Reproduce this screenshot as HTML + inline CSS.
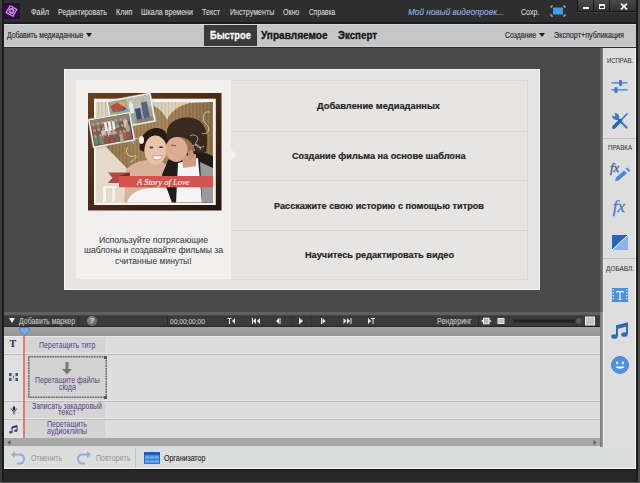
<!DOCTYPE html>
<html><head><meta charset="utf-8">
<style>
*{margin:0;padding:0;box-sizing:border-box}
html,body{width:640px;height:483px;overflow:hidden;background:#2b2b2b;font-family:"Liberation Sans",sans-serif}
.a{position:absolute}
.t{position:absolute;white-space:nowrap;line-height:1;transform-origin:0 0;font-family:"Liberation Sans",sans-serif}
</style></head><body>
<div class="a" style="left:0;top:0;width:640px;height:483px;background:#2b2b2b"></div>
<!-- title bar -->
<div class="a" style="left:0;top:0;width:640px;height:24px;background:#2e2e2e"></div>
<div class="a" style="left:0;top:0;width:2px;height:483px;background:#3c3c3c"></div>
<div class="a" style="left:2px;top:0;width:2px;height:483px;background:#1c1c1c"></div>
<div class="a" style="left:637px;top:0;width:3px;height:483px;background:#4a4a4a"></div>
<div class="a" style="left:636px;top:0;width:1.5px;height:483px;background:#1c1c1c"></div>
<!-- logo -->
<div class="a" style="left:3px;top:3px;width:17px;height:16px;background:radial-gradient(circle at 50% 50%,#45185c,#2a0c3a 75%)"></div>
<svg class="a" style="left:3px;top:3px" width="17" height="16" viewBox="0 0 17 16">
 <rect x="4.6" y="4.1" width="7.8" height="7.8" transform="rotate(30 8.5 8)" fill="none" stroke="#d3a0ea" stroke-width="1.1"/>
 <circle cx="8.5" cy="8" r="2.9" fill="#dc78f0"/><circle cx="8.5" cy="8" r="1" fill="#1e0628"/>
</svg>
<!-- screen icon -->
<svg class="a" style="left:550px;top:5px" width="16" height="12" viewBox="0 0 16 12">
 <rect x="3" y="2.5" width="10" height="7" fill="#3da0e0"/>
 <path d="M1 3V1H3M13 1H15V3M15 9V11H13M3 11H1V9" stroke="#bdbdbd" stroke-width="1" fill="none"/>
</svg>
<!-- window buttons -->
<div class="a" style="left:577px;top:0;width:60px;height:12px;background:#161616;border-radius:0 0 2px 2px"></div>
<div class="a" style="left:578px;top:0;width:15px;height:11px;background:linear-gradient(#4a4a4a,#323232)"></div>
<div class="a" style="left:594px;top:0;width:15px;height:11px;background:linear-gradient(#4a4a4a,#323232)"></div>
<div class="a" style="left:610px;top:0;width:26px;height:11px;background:linear-gradient(#4a4a4a,#323232)"></div>
<div class="a" style="left:583px;top:6.5px;width:6px;height:2px;background:#f4f4f4"></div>
<div class="a" style="left:599px;top:4px;width:6px;height:5px;border:1.2px solid #f4f4f4;border-top-width:2px"></div>
<svg class="a" style="left:619.5px;top:3px" width="8" height="7" viewBox="0 0 8 7"><path d="M1 0.5L7 6.5M7 0.5L1 6.5" stroke="#f4f4f4" stroke-width="1.8"/></svg>
<div class="a" style="left:577px;top:12px;width:60px;height:1px;background:#3a3a3a"></div>

<!-- toolbar -->
<div class="a" style="left:4px;top:24px;width:632px;height:23px;background:#c5c6c8"></div>
<div class="a" style="left:4px;top:47px;width:632px;height:1px;background:#2a2a2a"></div><div class="a" style="left:4px;top:46px;width:632px;height:1px;background:#d2d2d2"></div><div class="a" style="left:4px;top:24px;width:632px;height:1px;background:#d8d8d8"></div><div class="a" style="left:4px;top:22px;width:632px;height:2px;background:#1c1c1c"></div>
<div class="a" style="left:204px;top:25px;width:53px;height:21px;background:#3a3a3a"></div>
<svg class="a" style="left:86px;top:33px" width="6" height="4" viewBox="0 0 6 4"><path d="M0 0H6L3 4Z" fill="#1a1a1a"/></svg>
<svg class="a" style="left:538.5px;top:33px" width="6" height="4" viewBox="0 0 6 4"><path d="M0 0H6L3 4Z" fill="#1a1a1a"/></svg>

<!-- main area -->
<div class="a" style="left:4px;top:48px;width:596px;height:264px;background:#4a4a4a"></div>
<div class="a" style="left:600px;top:48px;width:3px;height:399px;background:linear-gradient(90deg,#5c5c5c,#7e7e7e)"></div><div class="a" style="left:600px;top:312px;width:3px;height:135px;background:linear-gradient(90deg,#7a7a7a,#9c9c9c)"></div>

<!-- welcome panel -->
<div class="a" style="left:64px;top:69px;width:476px;height:221px;background:#e5e4e2;border:1px solid #f3f3f2;border-right-color:#f8f8f8"></div>
<div class="a" style="left:230px;top:80px;width:298px;height:200px;border:1px solid #dad9d7;background:#e6e5e3"></div>
<div class="a" style="left:231px;top:130.5px;width:296px;height:1px;background:#d6d5d3"></div>
<div class="a" style="left:231px;top:180px;width:296px;height:1px;background:#d6d5d3"></div>
<div class="a" style="left:231px;top:229.5px;width:296px;height:1px;background:#d6d5d3"></div>
<div class="a" style="left:76px;top:80px;width:155px;height:199px;background:#f1f0ef"></div>
<svg class="a" style="left:230px;top:148px" width="8" height="14" viewBox="0 0 8 14"><path d="M0 0L7 7L0 14Z" fill="#f1f0ef"/></svg>

<!-- photo -->
<svg class="a" style="left:86px;top:88px" width="140" height="126" viewBox="86 88 140 126">
 <defs>
  <linearGradient id="wood" x1="0" y1="0" x2="1" y2="0">
   <stop offset="0" stop-color="#94744a"/><stop offset="0.5" stop-color="#a6855a"/><stop offset="1" stop-color="#8c6c44"/>
  </linearGradient>
  <linearGradient id="frm" x1="0" y1="0" x2="1" y2="1">
   <stop offset="0" stop-color="#6a3e1c"/><stop offset="0.6" stop-color="#432612"/><stop offset="1" stop-color="#22150c"/>
  </linearGradient>
  <pattern id="stripes" width="3.5" height="10" patternUnits="userSpaceOnUse"><rect x="0" width="1" height="10" fill="#000" opacity="0.10"/><rect x="2" width="0.6" height="10" fill="#fff" opacity="0.10"/></pattern>
  <clipPath id="pc"><rect x="96" y="102" width="117" height="100.5"/></clipPath>
 </defs>
 <rect x="88" y="93" width="133.5" height="117.5" fill="url(#frm)"/>
 <rect x="94" y="98.7" width="121.8" height="106.3" fill="#f4f2ee"/>
 <g clip-path="url(#pc)">
  <rect x="96" y="102" width="117" height="101" fill="#ddd1ba"/>
  <!-- heart wood -->
  <path d="M167 120 C162 108 150 102 138 104 L120 112 L104 140 L107 148 L133 175 L160 203 L213 203 L213 102 L190 103 C178 106 170 112 167 120Z" fill="url(#wood)"/>
  <rect x="96" y="102" width="117" height="101" fill="url(#stripes)"/>
  <path d="M96 150 L107 148 L133 175 L127 203 L96 203Z" fill="#e4dacb"/>
  <rect x="103" y="186" width="3" height="16" fill="#f6f4ef"/><rect x="112" y="188" width="3" height="14" fill="#f2efe9"/><rect x="103" y="186" width="14" height="2" fill="#f2efe9"/>
  <!-- woman -->
  <path d="M124 203 L126 170 C134 160 150 158 162 162 C172 166 176 180 176 203Z" fill="#d9b099"/>
  <path d="M140 150 C138 136 148 127 158 128 C166 129 170 136 168 146 L164 140 C158 134 150 134 146 142 L144 152Z" fill="#2a1c14"/>
  <ellipse cx="155.5" cy="150" rx="11" ry="14.5" fill="#e8c2aa"/>
  <path d="M145 140 C150 133 160 133 166 140 L166 136 C160 130 150 130 145 136Z" fill="#2a1c14"/>
  <ellipse cx="151.4" cy="147.5" rx="2" ry="0.9" fill="#5a3a30"/><ellipse cx="161" cy="147.2" rx="2" ry="0.9" fill="#5a3a30"/>
  <path d="M152 156.2 Q157.5 155.5 162.5 156 Q161 160 157 160 Q153 160 152 156.2Z" fill="#fafafa" stroke="#b86a60" stroke-width="0.6"/>
  <ellipse cx="141.5" cy="140" rx="2.5" ry="4" fill="#f0ece0"/>
  <path d="M127 203 C130 190 146 187 162 188 C172 189 178 196 180 203Z" fill="#f6f4f2"/>
  <!-- man -->
  <path d="M162 175 L168 160 L198 150 L213 156 L213 203 L172 203Z" fill="#1f1c1a"/>
  <path d="M178 163 L198 158 L202 203 L176 203Z" fill="#f4f4f4"/>
  <path d="M200 162 L213 168 L213 203 L202 203Z" fill="#9a9a98"/>
  <path d="M182 156 L196 154 L196 166 L183 168Z" fill="#cf9c82"/>
  <path d="M167 134 C166 122 180 116 192 118 C204 120 210 132 206 152 L196 153 C194 142 186 136 176 137 L168 141Z" fill="#3a291e"/>
  <ellipse cx="176.5" cy="149.5" rx="11" ry="12.5" fill="#dcab90"/>
  <path d="M168 140 C172 134 182 132 190 138 L188 132 C182 128 172 128 168 134Z" fill="#3a291e"/>
  <ellipse cx="191" cy="155" rx="3" ry="5" fill="#c89276"/>
  <path d="M171 145 L176 146" stroke="#6a4a3a" stroke-width="0.8"/>
<!-- swirls -->
  <g stroke="#f3ede2" stroke-width="0.7" fill="none" opacity="0.9">
   <path d="M210 112 C203 110 201 120 206 124 C211 128 208 136 202 133"/>
   <path d="M190 136 C194 133 200 137 197 141 C193 145 199 150 204 146"/>
   <path d="M193 146 C196 143 202 146 200 150"/>
   <path d="M128 147 C124 152 128 158 134 156 C138 154 136 160 130 162"/>
   <path d="M140 140 C136 136 130 140 134 144"/>
  </g>
 </g>
 <!-- photos (overlap frame) -->
 <g transform="translate(106 101) rotate(-10.8)">
 <rect x="0" y="0" width="45.3" height="29.4" fill="#f2f2f0" stroke="#b8b8b4" stroke-width="0.4"/>
 <rect x="1.6" y="1.6" width="42" height="26.2" fill="#9aa592"/>
 <rect x="20" y="1.6" width="23.6" height="12" fill="#b8c0b0"/>
 <path d="M3 6 L11 3.5 L17 9 L12 13 L5 12.5Z" fill="#c4483c"/><path d="M11 3.5 L17 9 L19 5Z" fill="#d8b53c"/><path d="M5 12.5 L12 13 L8 9.5Z" fill="#4a8e50"/><path d="M12 13 L17 9 L18.5 12Z" fill="#3c5294"/>
 <rect x="1.6" y="16" width="18" height="11.8" fill="#7a8a6a"/>
 <rect x="22" y="7" width="3.5" height="10" fill="#ecece8"/><circle cx="23.7" cy="6" r="1.6" fill="#e8d8c8"/>
 <rect x="27" y="13" width="5" height="12" fill="#3c4a7c"/><circle cx="29.5" cy="11.5" r="1.8" fill="#d8b8a0"/>
 <rect x="34" y="8" width="6" height="18" fill="#56627e"/><circle cx="37" cy="6.5" r="2" fill="#c8a890"/>
 <rect x="26" y="24" width="17" height="3.8" fill="#8a8070"/>
 </g>
 <g transform="translate(88 119.2) rotate(-10.1)">
 <rect x="0" y="0" width="42.8" height="29.3" fill="#f0f0ee" stroke="#b8b8b4" stroke-width="0.4"/>
 <rect x="1.6" y="1.6" width="39.6" height="26.1" fill="#5e5048"/>
 <rect x="1.6" y="1.6" width="39.6" height="7" fill="#8e8070"/>
 <rect x="2.5" y="6.3" width="3.5" height="8" fill="#a86050"/>
 <circle cx="4.2" cy="6.2" r="1.3" fill="#c0a088"/>
 <rect x="6.9" y="7.2" width="3.9" height="8" fill="#6a8a68"/>
 <circle cx="8.9" cy="6.2" r="1.3" fill="#c0a088"/>
 <rect x="11.8" y="6.5" width="3.9" height="8" fill="#a86050"/>
 <circle cx="13.8" cy="6.2" r="1.3" fill="#c0a088"/>
 <rect x="16.7" y="7.0" width="3.9" height="8" fill="#a86050"/>
 <circle cx="18.7" cy="6.2" r="1.3" fill="#c0a088"/>
 <rect x="21.4" y="7.7" width="3.3" height="8" fill="#7a88a0"/>
 <circle cx="23.0" cy="6.2" r="1.3" fill="#c0a088"/>
 <rect x="25.3" y="6.3" width="4.5" height="8" fill="#6a8a68"/>
 <circle cx="27.5" cy="6.2" r="1.3" fill="#c0a088"/>
 <rect x="30.7" y="7.6" width="3.1" height="8" fill="#9a5048"/>
 <circle cx="32.3" cy="6.2" r="1.3" fill="#c0a088"/>
 <rect x="34.2" y="7.4" width="4.2" height="8" fill="#c4c4c0"/>
 <circle cx="36.3" cy="6.2" r="1.3" fill="#c0a088"/>
 <rect x="2.5" y="13.9" width="3.8" height="8" fill="#5a6a88"/>
 <circle cx="4.4" cy="12.2" r="1.3" fill="#c0a088"/>
 <rect x="6.6" y="12.3" width="3.7" height="8" fill="#9a5048"/>
 <circle cx="8.5" cy="12.2" r="1.3" fill="#c0a088"/>
 <rect x="10.7" y="13.6" width="4.9" height="8" fill="#c4c4c0"/>
 <circle cx="13.2" cy="12.2" r="1.3" fill="#c0a088"/>
 <rect x="16.5" y="13.1" width="3.8" height="8" fill="#c4c4c0"/>
 <circle cx="18.4" cy="12.2" r="1.3" fill="#c0a088"/>
 <rect x="21.0" y="13.8" width="3.8" height="8" fill="#b4a494"/>
 <circle cx="22.9" cy="12.2" r="1.3" fill="#c0a088"/>
 <rect x="25.5" y="14.0" width="4.9" height="8" fill="#8e5a50"/>
 <circle cx="28.0" cy="12.2" r="1.3" fill="#c0a088"/>
 <rect x="31.1" y="13.9" width="3.3" height="8" fill="#786258"/>
 <circle cx="32.8" cy="12.2" r="1.3" fill="#c0a088"/>
 <rect x="35.4" y="13.3" width="4.1" height="8" fill="#b4a494"/>
 <circle cx="37.5" cy="12.2" r="1.3" fill="#c0a088"/>
 <rect x="2.5" y="18.1" width="3.5" height="8.5" fill="#6a8a68"/>
 <circle cx="4.3" cy="18.2" r="1.3" fill="#c0a088"/>
 <rect x="6.9" y="18.7" width="5.0" height="8.5" fill="#6a8a68"/>
 <circle cx="9.4" cy="18.2" r="1.3" fill="#c0a088"/>
 <rect x="12.2" y="18.6" width="4.8" height="8.5" fill="#9a5048"/>
 <circle cx="14.5" cy="18.2" r="1.3" fill="#c0a088"/>
 <rect x="17.8" y="19.2" width="4.7" height="8.5" fill="#9a5048"/>
 <circle cx="20.1" cy="18.2" r="1.3" fill="#c0a088"/>
 <rect x="23.3" y="19.1" width="3.8" height="8.5" fill="#786258"/>
 <circle cx="25.2" cy="18.2" r="1.3" fill="#c0a088"/>
 <rect x="28.0" y="20.0" width="3.6" height="8.5" fill="#b4a494"/>
 <circle cx="29.8" cy="18.2" r="1.3" fill="#c0a088"/>
 <rect x="32.0" y="18.1" width="3.2" height="8.5" fill="#a86050"/>
 <circle cx="33.6" cy="18.2" r="1.3" fill="#c0a088"/>
 <rect x="35.5" y="18.3" width="3.8" height="8.5" fill="#8e5a50"/>
 <circle cx="37.4" cy="18.2" r="1.3" fill="#c0a088"/>
 <rect x="15" y="6" width="2.5" height="9" fill="#f4f4f2"/><rect x="19" y="6" width="2.5" height="9" fill="#f4f4f2"/><rect x="23" y="6.5" width="2.5" height="8" fill="#f0f0ee"/>
 </g>
 <!-- banner -->
 <path d="M107.8 172.5 L129.7 172.5 L129.7 183 L107.8 183 L112.5 177.7Z" fill="#b84642"/>
 <path d="M119 176 L129.7 172.5 L129.7 176Z" fill="#7a2a28"/>
 <rect x="119" y="176" width="94" height="11.3" fill="#d4534e"/>
 <text x="137" y="184.6" font-family="Liberation Serif" font-style="italic" font-size="8.5" fill="#fbeae6" stroke="#fbeae6" stroke-width="0.15">A Story of Love</text>
</svg>

<!-- timeline -->
<div class="a" style="left:4px;top:312px;width:596px;height:3px;background:#606060"></div>
<div class="a" style="left:4px;top:315px;width:596px;height:12px;background:#3a3a3a"></div><div class="a" style="left:4px;top:326px;width:596px;height:1px;background:#222"></div>
<div class="a" style="left:78px;top:315px;width:1px;height:12px;background:#2a2a2a"></div>
<div class="a" style="left:478px;top:315px;width:1px;height:12px;background:#2a2a2a"></div><div class="a" style="left:167px;top:315px;width:1px;height:12px;background:#2a2a2a"></div><div class="a" style="left:291px;top:316px;width:1px;height:10px;background:#333"></div><div class="a" style="left:311px;top:316px;width:1px;height:10px;background:#333"></div><div class="a" style="left:4px;top:315px;width:596px;height:1px;background:#444"></div>
<svg class="a" style="left:9px;top:318px" width="6" height="5" viewBox="0 0 6 5"><path d="M0 0H6L3 5Z" fill="#f0f0f0"/></svg>
<div class="a" style="left:87px;top:316px;width:9.5px;height:9.5px;border-radius:50%;background:radial-gradient(circle at 40% 35%,#8a8a8a,#5e5e5e)"></div>
<div class="t" style="left:89.6px;top:317px;font-size:8px;font-weight:700;color:#dcdcdc">?</div>
<!-- transport icons -->
<svg class="a" style="left:220px;top:315px" width="160" height="12" viewBox="0 0 160 12">
 <g fill="#e8e8e8">
  <path d="M7.5 3H11.5V4H10V9H9V4H7.5Z"/><path d="M15 3V9L12 6Z"/>
  <rect x="32" y="3" width="1" height="6"/><path d="M36 3V9L33 6Z"/><path d="M40 3V9L37 6Z"/>
  <path d="M59 3V9L56 6Z"/><rect x="59.5" y="3" width="1" height="6"/>
  <path d="M79 2.5L83 6L79 9.5Z"/>
  <rect x="101" y="3" width="1" height="6"/><path d="M102.5 3L105.5 6L102.5 9Z"/>
  <path d="M123.5 3L126.5 6L123.5 9Z"/><path d="M127 3L130 6L127 9Z"/><rect x="130.5" y="3" width="1" height="6"/>
  <path d="M148 3L151 6L148 9Z"/><path d="M151 3H155V4H153.5V9H152.5V4H151Z"/>
 </g>
</svg>
<svg class="a" style="left:480px;top:315px" width="120" height="12" viewBox="0 0 120 12">
 <g fill="#e0e0e0">
  <path d="M1 6L3.2 4.2V7.8Z"/><rect x="3.5" y="3.2" width="5.5" height="5.6" fill="#b8b8b8" stroke="#f0f0f0" stroke-width="1"/><path d="M11.5 6L9.3 4.2V7.8Z"/>
 </g>
 <rect x="18" y="3.5" width="6" height="5" fill="#c0c0c0" stroke="#e8e8e8" stroke-width="1"/>
 <rect x="33" y="4.6" width="65" height="2.8" rx="1.4" fill="#222"/>
 <circle cx="98.7" cy="6" r="3" fill="#5a5a5a" stroke="#444" stroke-width="0.5"/>
 <rect x="105.5" y="2" width="9" height="8" fill="#c4c4c4" stroke="#ececec" stroke-width="1"/>
</svg>
<div class="a" style="left:4px;top:327px;width:596px;height:9px;background:linear-gradient(#a2a2a2,#959595)"></div>
<div class="a" style="left:4px;top:336px;width:596px;height:102px;background:#dddddd"></div>
<div class="a" style="left:4px;top:336px;width:19px;height:102px;background:#e0e0e0"></div>
<div class="a" style="left:25px;top:336px;width:81px;height:102px;background:#d4d4d4"></div>
<div class="a" style="left:106px;top:336px;width:1px;height:102px;background:#e6e6e6"></div><div class="a" style="left:4px;top:336px;width:596px;height:1px;background:#e9e9e9"></div>
<div class="a" style="left:4px;top:353px;width:596px;height:1px;background:#e8e8e8"></div><div class="a" style="left:4px;top:354px;width:596px;height:1px;background:#bcbcbc"></div>
<div class="a" style="left:4px;top:400px;width:596px;height:1px;background:#e8e8e8"></div><div class="a" style="left:4px;top:401px;width:596px;height:1px;background:#bcbcbc"></div>
<div class="a" style="left:4px;top:418px;width:596px;height:1px;background:#e8e8e8"></div><div class="a" style="left:4px;top:419px;width:596px;height:1px;background:#bcbcbc"></div>
<div class="a" style="left:28px;top:356px;width:78px;height:42px;background:#d2d2d2"></div><svg class="a" style="left:27px;top:355px" width="81" height="45" viewBox="0 0 81 45"><rect x="1.75" y="1.75" width="77.5" height="40.5" fill="none" stroke="#727272" stroke-width="1.6" stroke-dasharray="2 0.6"/></svg>
<div class="a" style="left:103.5px;top:355.5px;width:3px;height:3px;background:#555"></div>
<div class="a" style="left:103.5px;top:395.5px;width:3px;height:3px;background:#555"></div>
<svg class="a" style="left:61px;top:362px" width="12" height="13" viewBox="0 0 12 13"><path d="M4.5 0H7.5V7H11L6 12.5L1 7H4.5Z" fill="#7a7a7a"/></svg>
<div class="a" style="left:23px;top:336px;width:2px;height:102px;background:#ea7670"></div>
<svg class="a" style="left:18.5px;top:327px" width="11" height="9" viewBox="0 0 11 9"><path d="M0.5 2Q0.5 0.5 2 0.5H9Q10.5 0.5 10.5 2V3.5L5.5 8.3L0.5 3.5Z" fill="#78aaea" stroke="#4a78c0" stroke-width="0.8"/></svg>
<!-- track icons -->
<div class="t" style="left:9.5px;top:339px;font-family:'Liberation Serif';font-size:10px;font-weight:700;color:#1e2d55">T</div>
<svg class="a" style="left:9px;top:373px" width="9" height="8" viewBox="0 0 9 8"><rect x="0" y="0" width="9" height="8" fill="#44568a"/><rect x="2.5" y="0" width="4" height="8" fill="#c8d0e0"/><rect x="0" y="3" width="9" height="2" fill="#c8d0e0"/><circle cx="4.5" cy="4" r="1.6" fill="#eef"/><circle cx="4.5" cy="4" r="0.8" fill="#222"/></svg>
<svg class="a" style="left:10px;top:406px" width="8" height="9" viewBox="0 0 8 9"><ellipse cx="4" cy="2.5" rx="1.3" ry="2.2" fill="#1e2850"/><path d="M1 2.5L4 6.5L7 2.5" stroke="#3a4570" fill="none" stroke-width="0.9"/><path d="M4 6.5V8.5" stroke="#1e2850" stroke-width="1"/></svg>
<svg class="a" style="left:9px;top:424px" width="9" height="10" viewBox="0 0 9 10"><path d="M3 8V3L8 1.5V6.5" stroke="#2a3668" fill="none" stroke-width="1"/><path d="M3 3L8 1.5V3L3 4.5Z" fill="#2a3668"/><ellipse cx="1.8" cy="8.2" rx="1.7" ry="1.2" fill="#3a4a90"/><ellipse cx="6.8" cy="6.8" rx="1.7" ry="1.2" fill="#3a4a90"/></svg>
<!-- scrollbar -->
<div class="a" style="left:4px;top:438px;width:596px;height:9px;background:#a8a8a8"></div><div class="a" style="left:4px;top:446px;width:596px;height:1px;background:#d8d8d8"></div>
<svg class="a" style="left:7px;top:440px" width="4" height="5" viewBox="0 0 4 5"><path d="M3.5 0V5L0.5 2.5Z" fill="#5a5a5a"/></svg>
<svg class="a" style="left:593px;top:440px" width="4" height="5" viewBox="0 0 4 5"><path d="M0.5 0V5L3.5 2.5Z" fill="#5a5a5a"/></svg>

<!-- right panel -->
<div class="a" style="left:603px;top:48px;width:33px;height:399px;background:#dddedd;border-left:1px solid #e9e9e9;border-right:1px solid #f4f4f4"></div>
<div class="a" style="left:603px;top:138px;width:33px;height:1px;background:#c2c2c2"></div>
<div class="a" style="left:603px;top:258px;width:33px;height:1px;background:#c2c2c2"></div>
<!-- sliders icon -->
<svg class="a" style="left:610px;top:79px" width="20" height="15" viewBox="0 0 20 15">
 <g fill="#3d7ed0"><rect x="1.5" y="3.2" width="16" height="1.3"/><rect x="1.5" y="10.2" width="16" height="1.3"/>
 <rect x="9" y="1" width="3" height="6" rx="1"/><rect x="4.5" y="8" width="3" height="6" rx="1"/></g>
</svg>
<!-- wrench -->
<svg class="a" style="left:611px;top:112px" width="18" height="18" viewBox="0 0 18 18">
 <path d="M5.5 5.5L15.5 15.5" stroke="#3c7ccc" stroke-width="2.3" stroke-linecap="round"/>
 <path d="M1.2 3.2A4 4 0 0 0 7.5 7.2A4 4 0 0 0 3.4 1L4.6 3.6L3.6 4.6Z" fill="#3c7ccc"/>
 <path d="M16.5 1.5L9 9" stroke="#2f6cbc" stroke-width="1.4"/>
 <path d="M9.5 8.5L2.8 15.2" stroke="#2d64b0" stroke-width="3.4" stroke-linecap="round"/>
</svg>
<!-- fx pencil -->
<div class="t" style="left:610px;top:161px;font-family:'Liberation Serif';font-size:13px;font-style:italic;color:#36609e;-webkit-text-stroke:0.3px #36609e">fx</div>
<svg class="a" style="left:613px;top:167px" width="18" height="16" viewBox="0 0 18 16">
 <path d="M1.5 14.8L2.6 10.6L11 3L14.2 6.2L5.8 13.8Z" fill="#4a8ad8" stroke="#e8eef6" stroke-width="0.6"/><path d="M12.6 1.6L14 0.4L17.3 3.6L15.9 4.9Z" fill="#4a8ad8"/>
</svg>
<div class="t" style="left:612.7px;top:198.3px;font-family:'Liberation Serif';font-size:17px;font-style:italic;color:#3f7ccf;-webkit-text-stroke:0.3px #3f7ccf">fx</div>
<!-- split square -->
<svg class="a" style="left:612px;top:234.5px" width="16" height="15" viewBox="0 0 16 15">
 <path d="M0 0H16L0 15Z" fill="#2a64b8"/><path d="M16 0V15H0Z" fill="#8ab4e8"/><path d="M16 0L0 15" stroke="#eef" stroke-width="1"/>
</svg>
<!-- T icon -->
<svg class="a" style="left:611.5px;top:287.5px" width="16" height="14" viewBox="0 0 16 14">
 <rect width="16" height="14" fill="#4d8fdc"/><g fill="#cfe2f8"><rect x="0.7" y="1" width="1.3" height="1.3"/><rect x="0.7" y="4" width="1.3" height="1.3"/><rect x="0.7" y="7" width="1.3" height="1.3"/><rect x="0.7" y="10" width="1.3" height="1.3"/><rect x="14" y="1" width="1.3" height="1.3"/><rect x="14" y="4" width="1.3" height="1.3"/><rect x="14" y="7" width="1.3" height="1.3"/><rect x="14" y="10" width="1.3" height="1.3"/></g>
 <path d="M4.5 3H11.5V5H10.8L10.5 4H8.6V11H9.6V12H6.4V11H7.4V4H5.5L5.2 5H4.5Z" fill="#fff"/>
</svg>
<!-- music -->
<svg class="a" style="left:611px;top:322px" width="17" height="18" viewBox="0 0 17 18">
 <path d="M6 14V4L16 1.5V12" stroke="#2f6ab8" stroke-width="2" fill="none"/><path d="M6 4L16 1.5V4.5L6 7Z" fill="#2f6ab8"/>
 <ellipse cx="3.5" cy="14.5" rx="3.2" ry="2.3" fill="#2f6ab8"/><ellipse cx="13.5" cy="12.5" rx="3.2" ry="2.3" fill="#2f6ab8"/>
</svg>
<!-- smiley -->
<svg class="a" style="left:611px;top:356px" width="18" height="18" viewBox="0 0 18 18">
 <circle cx="9" cy="9" r="8.5" fill="#4f93e0" stroke="#3a7acb" stroke-width="0.8"/>
 <ellipse cx="6.2" cy="7" rx="1.1" ry="1.4" fill="#fff"/><ellipse cx="11.8" cy="7" rx="1.1" ry="1.4" fill="#fff"/>
 <path d="M4.5 10.5C6 13.5 12 13.5 13.5 10.5Z" fill="#fff"/>
</svg>

<!-- bottom bar -->
<div class="a" style="left:4px;top:447px;width:632px;height:21px;background:#dcdedd;border-right:1px solid #f4f4f4"></div>
<div class="a" style="left:4px;top:468px;width:632px;height:1px;background:#f6f6f6"></div><div class="a" style="left:4px;top:469px;width:632px;height:1px;background:#181818"></div><div class="a" style="left:4px;top:470px;width:632px;height:12px;background:#272727"></div><div class="a" style="left:0;top:482px;width:640px;height:1px;background:#5a5a5a"></div>
<div class="a" style="left:135px;top:448px;width:1px;height:20px;background:#c2c2c2"></div>
<svg class="a" style="left:10px;top:450px" width="16" height="16" viewBox="0 0 16 16">
 <path d="M4 4.5H9.5C12.5 4.5 14 6.5 14 9C14 11.5 12.5 13.5 9.5 13.5H7" stroke="#8fb3d8" stroke-width="2" fill="none"/><path d="M1 4.5L5 1V8Z" fill="#8fb3d8"/>
</svg>
<svg class="a" style="left:76px;top:450px" width="16" height="16" viewBox="0 0 16 16">
 <path d="M12 4.5H6.5C3.5 4.5 2 6.5 2 9C2 11.5 3.5 13.5 6.5 13.5H9" stroke="#8fb3d8" stroke-width="2" fill="none"/><path d="M15 4.5L11 1V8Z" fill="#8fb3d8"/>
</svg>
<svg class="a" style="left:144px;top:451.7px" width="16" height="12.3" viewBox="0 0 16 12.3">
 <rect width="16" height="12.3" fill="#2a6cc4"/><rect x="0" y="0" width="16" height="2.6" fill="#1a5cb4"/>
 <rect x="1" y="3.4" width="14" height="8" fill="#5a9ae6"/>
 <g stroke="#3a78cc" stroke-width="0.8"><path d="M1 7.4H15M5.7 3.4V11.4M10.3 3.4V11.4"/></g>
 <g stroke="#b8d4f4" stroke-width="0.5" opacity="0.8"><path d="M1 5.4H15M1 9.4H15"/></g>
</svg>
<div class="t" style="left:31.0px;top:8px;font-size:8.5px;font-weight:400;color:#dadada;-webkit-text-stroke:0.1px #dadada;transform:scaleX(0.861)">Файл</div>
<div class="t" style="left:58.0px;top:8px;font-size:8.5px;font-weight:400;color:#dadada;-webkit-text-stroke:0.1px #dadada;transform:scaleX(0.834)">Редактировать</div>
<div class="t" style="left:115.6px;top:8px;font-size:8.5px;font-weight:400;color:#dadada;-webkit-text-stroke:0.1px #dadada;transform:scaleX(0.851)">Клип</div>
<div class="t" style="left:141.0px;top:8px;font-size:8.5px;font-weight:400;color:#dadada;-webkit-text-stroke:0.1px #dadada;transform:scaleX(0.832)">Шкала времени</div>
<div class="t" style="left:202.0px;top:8px;font-size:8.5px;font-weight:400;color:#dadada;-webkit-text-stroke:0.1px #dadada;transform:scaleX(0.841)">Текст</div>
<div class="t" style="left:229.7px;top:8px;font-size:8.5px;font-weight:400;color:#dadada;-webkit-text-stroke:0.1px #dadada;transform:scaleX(0.836)">Инструменты</div>
<div class="t" style="left:282.8px;top:8px;font-size:8.5px;font-weight:400;color:#dadada;-webkit-text-stroke:0.1px #dadada;transform:scaleX(0.820)">Окно</div>
<div class="t" style="left:308.5px;top:8px;font-size:8.5px;font-weight:400;color:#dadada;-webkit-text-stroke:0.1px #dadada;transform:scaleX(0.785)">Справка</div>
<div class="t" style="left:408.0px;top:7px;font-size:9.5px;font-weight:400;font-style:italic;color:#88b2e6;-webkit-text-stroke:0.15px #88b2e6;transform:scaleX(0.864)">Мой новый видеопроек...</div>
<div class="t" style="left:520.6px;top:8px;font-size:8.5px;font-weight:400;color:#d4d4d4;-webkit-text-stroke:0.1px #d4d4d4;transform:scaleX(0.832)">Сохр.</div>
<div class="t" style="left:6.6px;top:31px;font-size:8.5px;font-weight:400;color:#26262e;-webkit-text-stroke:0.15px #26262e;transform:scaleX(0.807)">Добавить медиаданные</div>
<div class="t" style="left:209.8px;top:31px;font-size:10px;font-weight:700;color:#f6f6f6;-webkit-text-stroke:0.35px #f6f6f6;transform:scaleX(0.929)">Быстрое</div>
<div class="t" style="left:260.7px;top:31px;font-size:10px;font-weight:700;color:#141414;-webkit-text-stroke:0.3px #141414;transform:scaleX(1.006)">Управляемое</div>
<div class="t" style="left:338.0px;top:31px;font-size:10px;font-weight:700;color:#141414;-webkit-text-stroke:0.3px #141414;transform:scaleX(0.974)">Эксперт</div>
<div class="t" style="left:505.0px;top:31px;font-size:8.5px;font-weight:400;color:#26262e;-webkit-text-stroke:0.15px #26262e;transform:scaleX(0.808)">Создание</div>
<div class="t" style="left:554.0px;top:31px;font-size:8.5px;font-weight:400;color:#26262e;-webkit-text-stroke:0.15px #26262e;transform:scaleX(0.844)">Экспорт+публикация</div>
<div class="t" style="left:317.0px;top:102px;font-size:9px;font-weight:700;color:#262626;-webkit-text-stroke:0.2px #262626;transform:scaleX(1.031)">Добавление медиаданных</div>
<div class="t" style="left:292.0px;top:152px;font-size:9px;font-weight:700;color:#262626;-webkit-text-stroke:0.2px #262626;transform:scaleX(1.016)">Создание фильма на основе шаблона</div>
<div class="t" style="left:274.0px;top:202px;font-size:9px;font-weight:700;color:#262626;-webkit-text-stroke:0.2px #262626;transform:scaleX(1.017)">Расскажите свою историю с помощью титров</div>
<div class="t" style="left:305.0px;top:251px;font-size:9px;font-weight:700;color:#262626;-webkit-text-stroke:0.2px #262626;transform:scaleX(1.018)">Научитесь редактировать видео</div>
<div class="t" style="left:98.8px;top:235px;font-size:9.5px;font-weight:400;color:#44444c;-webkit-text-stroke:0.1px #44444c;transform:scaleX(0.914)">Используйте потрясающие</div>
<div class="t" style="left:83.5px;top:245px;font-size:9.5px;font-weight:400;color:#44444c;-webkit-text-stroke:0.1px #44444c;transform:scaleX(0.906)">шаблоны и создавайте фильмы за</div>
<div class="t" style="left:114.7px;top:256px;font-size:9.5px;font-weight:400;color:#44444c;-webkit-text-stroke:0.1px #44444c;transform:scaleX(0.898)">считанные минуты!</div>
<div class="t" style="left:19.0px;top:317px;font-size:8.5px;font-weight:400;color:#c8c8c8;-webkit-text-stroke:0.1px #c8c8c8;transform:scaleX(0.818)">Добавить маркер</div>
<div class="t" style="left:170.0px;top:318px;font-size:7.5px;font-weight:400;color:#c8c8c8;-webkit-text-stroke:0.1px #c8c8c8;transform:scaleX(0.883)">00;00;00;00</div>
<div class="t" style="left:437.0px;top:317px;font-size:8.5px;font-weight:400;color:#c8c8c8;-webkit-text-stroke:0.1px #c8c8c8;transform:scaleX(0.830)">Рендеринг</div>
<div class="t" style="left:38.5px;top:341px;font-size:8.5px;font-weight:400;color:#5c4088;-webkit-text-stroke:0px #5c4088;transform:scaleX(0.828)">Перетащить титр</div>
<div class="t" style="left:34.7px;top:376px;font-size:8.5px;font-weight:400;color:#5c4088;-webkit-text-stroke:0px #5c4088;transform:scaleX(0.822)">Перетащите файлы</div>
<div class="t" style="left:59.0px;top:383px;font-size:8.5px;font-weight:400;color:#5c4088;-webkit-text-stroke:0px #5c4088;transform:scaleX(0.844)">сюда</div>
<div class="t" style="left:32.0px;top:402px;font-size:8.5px;font-weight:400;color:#5c4088;-webkit-text-stroke:0px #5c4088;transform:scaleX(0.816)">Записать закадровый</div>
<div class="t" style="left:58.0px;top:408px;font-size:8.5px;font-weight:400;color:#5c4088;-webkit-text-stroke:0px #5c4088;transform:scaleX(0.879)">текст</div>
<div class="t" style="left:47.0px;top:420px;font-size:8.5px;font-weight:400;color:#5c4088;-webkit-text-stroke:0px #5c4088;transform:scaleX(0.823)">Перетащить</div>
<div class="t" style="left:47.0px;top:427px;font-size:8.5px;font-weight:400;color:#5c4088;-webkit-text-stroke:0px #5c4088;transform:scaleX(0.846)">аудиоклипы</div>
<div class="t" style="left:31.0px;top:454px;font-size:8.5px;font-weight:400;color:#9c9c9c;-webkit-text-stroke:0.1px #9c9c9c;transform:scaleX(0.798)">Отменить</div>
<div class="t" style="left:95.7px;top:454px;font-size:8.5px;font-weight:400;color:#9c9c9c;-webkit-text-stroke:0.1px #9c9c9c;transform:scaleX(0.827)">Повторить</div>
<div class="t" style="left:163.7px;top:454px;font-size:8.5px;font-weight:400;color:#2a2a2a;-webkit-text-stroke:0.15px #2a2a2a;transform:scaleX(0.824)">Организатор</div>
<div class="t" style="left:607.0px;top:57px;font-size:7.5px;font-weight:400;color:#363636;-webkit-text-stroke:0.05px #363636;transform:scaleX(0.793)">ИСПРАВ.</div>
<div class="t" style="left:608.0px;top:144px;font-size:7.5px;font-weight:400;color:#363636;-webkit-text-stroke:0.05px #363636;transform:scaleX(0.820)">ПРАВКА</div>
<div class="t" style="left:605.7px;top:265px;font-size:7.5px;font-weight:400;color:#363636;-webkit-text-stroke:0.05px #363636;transform:scaleX(0.862)">ДОБАВЛ.</div>
</body></html>
